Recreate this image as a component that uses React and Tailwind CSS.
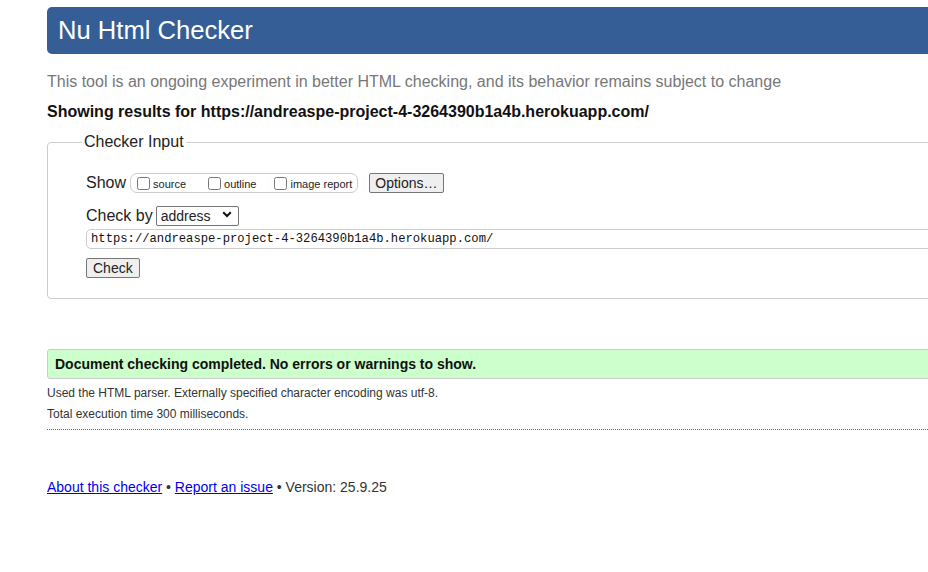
import React, { useState } from "react";

const sans = "font-['Liberation_Sans',Arial,sans-serif]";
const mono = "font-['Liberation_Mono','DejaVu_Sans_Mono',monospace]";

const url = "https://andreaspe-project-4-3264390b1a4b.herokuapp.com/";

const ShowOption = ({ label, gap }) => (
    <label className={`flex items-center ${gap}`}>
        <input type="checkbox" className="m-[3px_3px_3px_4px] h-[13px] w-[13px]" />
        <span className="text-[11px] leading-[13px] pt-[2px]">{label}</span>
    </label>
);

const App = () => {
    const [checkBy, setCheckBy] = useState("address");

    return (
        <div className={`w-full min-h-[572px] overflow-hidden bg-white text-[#222] ${sans}`}>
            <div className="w-[1100px] pl-[47px] pt-[7px]">
                <h1 className="h-[47px] flex items-center pl-[11px] bg-[#365e96] rounded-l-[5px] text-white text-[25.6px] font-normal">
                    Nu Html Checker
                </h1>

                <p className="mt-[19px] text-[16px] leading-[18px] text-[#777]">
                    This tool is an ongoing experiment in better HTML checking, and its behavior remains subject to change
                </p>
                <p className="mt-[12px] text-[16px] leading-[18px] font-bold text-[#111]">
                    Showing results for {url}
                </p>

                <fieldset className="mt-[12px] border border-[#ccc] rounded-[4px] pl-[38px] pb-[20px]">
                    <legend className="-ml-[4px] px-[2px] text-[16px] leading-[18px] text-[#222]">Checker Input</legend>

                    <div className="flex items-center mt-[21px] h-[22px]">
                        <span className="text-[16px] mr-[4px]">Show</span>
                        <div className="flex items-center h-[20px] border border-[#ccc] rounded-[7px] pl-[2px]">
                            <ShowOption label="source" gap="mr-[18px]" />
                            <ShowOption label="outline" gap="mr-[14px]" />
                            <ShowOption label="image report" gap="mr-[5px]" />
                        </div>
                        <button className="ml-[11px] h-[20px] px-[5px] bg-[#efefef] border border-[#767676] rounded-[2px] text-[14px] leading-[16px]">
                            Options…
                        </button>
                    </div>

                    <div className="flex items-center mt-[12px] h-[20px]">
                        <span className="text-[16px] mr-[3px]">Check by</span>
                        <div className="relative">
                            <select
                                value={checkBy}
                                onChange={(e) => setCheckBy(e.target.value)}
                                className="appearance-none w-[83px] h-[20px] pl-[4px] border border-[#767676] rounded-[2px] bg-white text-[14px] leading-[16px]"
                            >
                                <option value="address">address</option>
                                <option value="file">file upload</option>
                                <option value="text">text input</option>
                            </select>
                            <svg className="absolute right-[7px] top-[7px] pointer-events-none" width="10" height="7" viewBox="0 0 10 7">
                                <path d="M1.2 1.2 L5 5 L8.8 1.2" fill="none" stroke="#111" strokeWidth="2" />
                            </svg>
                        </div>
                    </div>

                    <input
                        type="text"
                        defaultValue={url}
                        className={`mt-[3px] block w-full h-[20px] px-[4px] border border-[#ccc] rounded-[5px] text-[12.2px] text-[#111] ${mono}`}
                    />

                    <button className="mt-[9px] block h-[20px] px-[6px] bg-[#efefef] border border-[#767676] rounded-[2px] text-[14px] leading-[16px]">
                        Check
                    </button>
                </fieldset>

                <div className="mt-[50px] h-[30px] flex items-center pl-[7px] bg-[#ccffcc] border border-[#ccc] rounded-l-[3px] text-[14px] font-bold text-[#111]">
                    Document checking completed. No errors or warnings to show.
                </div>

                <p className="mt-[7px] text-[12px] leading-[14px] text-[#333]">
                    Used the HTML parser. Externally specified character encoding was utf-8.
                </p>
                <p className="mt-[7px] text-[12px] leading-[14px] text-[#333]">
                    Total execution time 300 milliseconds.
                </p>
                <div className="mt-[8px] border-t border-dotted border-[#666]" />

                <p className="mt-[49px] text-[14px] leading-[16px] text-[#333]">
                    <a href="#" className="text-[#0000ee] underline">About this checker</a>
                    {" • "}
                    <a href="#" className="text-[#0000ee] underline">Report an issue</a>
                    {" • Version: 25.9.25"}
                </p>
            </div>
        </div>
    );
};

export default App;
